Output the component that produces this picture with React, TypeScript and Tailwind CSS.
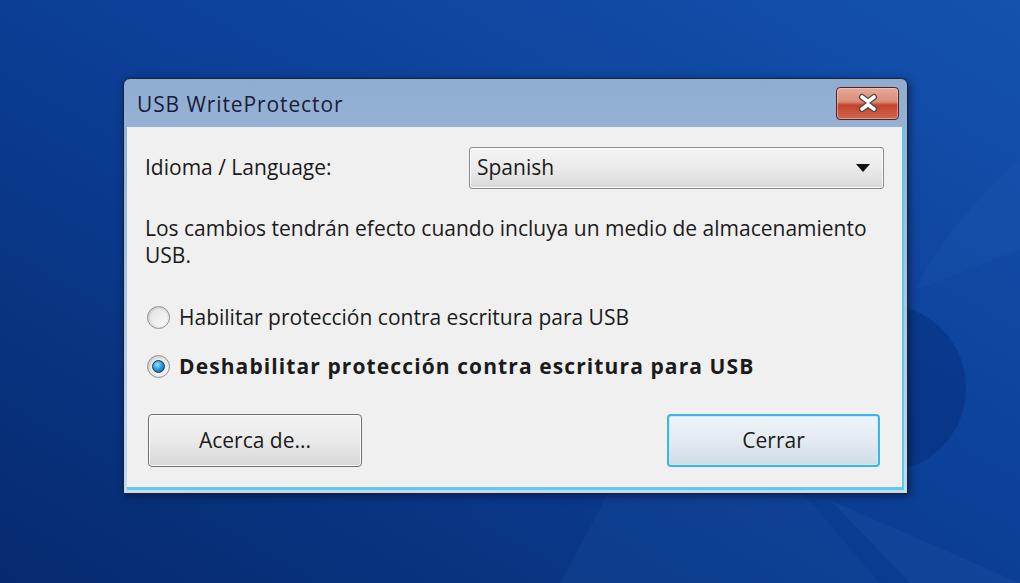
const font = { fontFamily: '"Open Sans", "Noto Sans", "Liberation Sans", sans-serif' };

const Radio = ({ checked }: { checked: boolean }) => (
  <span className="relative flex h-[23px] w-[23px] shrink-0 items-center justify-center rounded-full border border-[#8e8f8f] bg-gradient-to-br from-[#c9c9c9] to-[#f7f7f7]">
    <span className="flex h-[17px] w-[17px] items-center justify-center rounded-full bg-gradient-to-br from-[#e2e2e2] to-[#fbfbfb]">
      {checked && (
        <span className="h-[13px] w-[13px] rounded-full border border-[#1a3d5c] bg-[radial-gradient(circle_at_40%_35%,#9fe2ff_0%,#2a9ee0_45%,#0e4d84_100%)]" />
      )}
    </span>
  </span>
);

const Background = () => (
  <svg className="absolute inset-0" width="1020" height="583" viewBox="0 0 1020 583">
    <defs>
      <linearGradient id="bg" x1="1" y1="0" x2="0" y2="1">
        <stop offset="0" stopColor="#1452b0" />
        <stop offset="0.55" stopColor="#0b3c92" />
        <stop offset="1" stopColor="#062a6e" />
      </linearGradient>
    </defs>
    <rect width="1020" height="583" fill="url(#bg)" />
    <circle cx="882" cy="388" r="84" fill="#06307e" opacity="0.55" />
    <path d="M1020 160 Q950 220 915 290 L1020 250 Z" fill="#2a62bb" opacity="0.15" />
    <path d="M560 583 L610 490 L800 490 L880 583 Z" fill="#1c4c9c" opacity="0.3" />
    <path d="M830 500 L1020 583 L910 583 Z" fill="#2456a8" opacity="0.25" />
  </svg>
);

export default function App() {
  return (
    <div className="relative h-[583px] w-[1020px] overflow-hidden text-[#1b1b1b]" style={font}>
      <Background />
      <div className="relative pl-[123px] pt-[78px]">
        <div className="flex h-[416px] w-[785px] flex-col rounded-t-[7px] border border-[#1a2232] bg-gradient-to-b from-[#8fadd1] via-[#a9c3e1] to-[#c4daef] px-[3px] pb-[3px] shadow-[2px_2px_8px_rgba(0,0,0,0.45)]">
          <div className="flex h-[48px] shrink-0 items-center justify-between pl-[10px] pr-[5px]">
            <span className="pt-[3px] text-[21px] tracking-[0.9px] text-[#1c1c3a]">USB WriteProtector</span>
            <div className="flex h-[33px] w-[63px] items-center justify-center rounded-[4px] border border-[#4e2323] bg-[linear-gradient(#e7aa98_0%,#d88b77_45%,#c3432c_55%,#d06750_100%)] shadow-[inset_0_0_0_1px_rgba(255,210,200,0.5)]">
              <svg width="26" height="20" viewBox="0 0 26 20">
                <path d="M7 4 L13 8.5 L19 4 M7 16 L13 11.5 L19 16" stroke="#4a4a4a" strokeWidth="6" strokeLinecap="round" fill="none" />
                <path d="M7 4 L13 8.5 L19 4 M7 16 L13 11.5 L19 16" stroke="#ffffff" strokeWidth="3.6" strokeLinecap="round" fill="none" />
              </svg>
            </div>
          </div>
          <div className="flex flex-1 flex-col border-b-[3px] border-r-[2px] border-[#5ec9ea] bg-[#f0f0f0] px-[18px] text-[21px]">
            <div className="mt-[20px] flex items-center justify-between">
              <span>Idioma / Language:</span>
              <div className="flex h-[42px] w-[415px] items-center justify-between rounded-[3px] border border-[#8b8b8b] bg-gradient-to-b from-[#f4f4f4] via-[#ebebeb] to-[#d9d9d9] pl-[7px] pr-[13px] shadow-[inset_0_0_0_1px_#fafafa]">
                <span>Spanish</span>
                <svg width="14" height="8" viewBox="0 0 14 8">
                  <path d="M0 0 H14 L7 8 Z" fill="#111" />
                </svg>
              </div>
            </div>
            <p className="mt-[26px] leading-[27px]">
              Los cambios tendrán efecto cuando incluya un medio de almacenamiento USB.
            </p>
            <label className="mt-[35px] flex items-center gap-[9px] pl-[2px] leading-[27px]">
              <Radio checked={false} />
              <span>Habilitar protección contra escritura para USB</span>
            </label>
            <label className="mt-[22px] flex items-center gap-[9px] pl-[2px] leading-[27px]">
              <Radio checked />
              <span className="font-bold tracking-[1.1px]">Deshabilitar protección contra escritura para USB</span>
            </label>
            <div className="mt-[34px] flex items-center justify-between pl-[3px] pr-[4px]">
              <button className="flex h-[53px] w-[214px] items-center justify-center rounded-[4px] border border-[#707070] bg-gradient-to-b from-[#f2f2f2] via-[#ebebeb] to-[#d6d6d6] shadow-[inset_0_0_0_1px_#fbfbfb]">
                Acerca de...
              </button>
              <button className="flex h-[53px] w-[213px] items-center justify-center rounded-[4px] border-2 border-[#3cb6e8] bg-gradient-to-b from-[#eef4f8] via-[#e3ebf0] to-[#cfdbe3] shadow-[inset_0_0_0_1px_#c8ecfa]">
                Cerrar
              </button>
            </div>
          </div>
        </div>
      </div>
    </div>
  );
}
